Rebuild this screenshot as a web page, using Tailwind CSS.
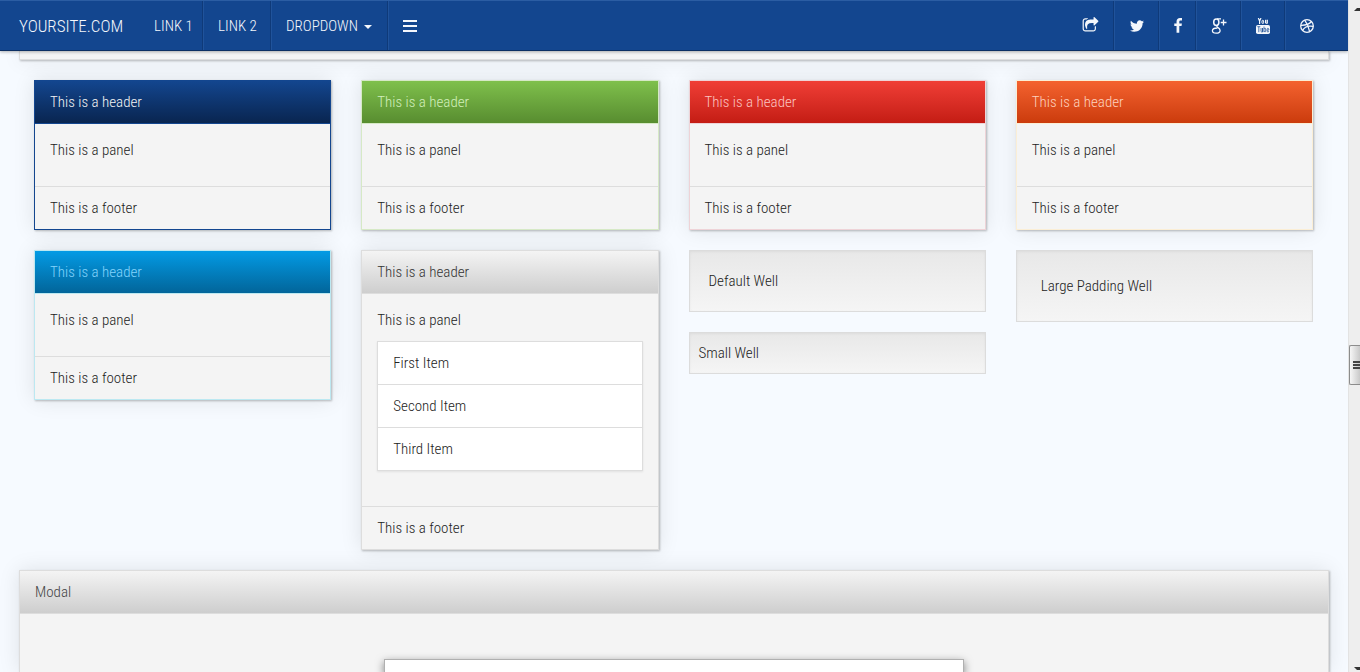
<!DOCTYPE html>
<html lang="en">
<head>
<meta charset="utf-8">
<title>YourSite.com</title>
<script src="https://cdn.jsdelivr.net/npm/@tailwindcss/browser@4"></script>
</head>
<body class="flex h-screen overflow-hidden bg-[#f6faff] font-['Roboto_Condensed','Liberation_Sans',sans-serif] text-[15px] font-light leading-[22px] text-[#222]">

<div class="flex min-w-0 flex-1 flex-col overflow-hidden">
  <header class="relative z-10 shrink-0 border-t border-b border-t-[#2b5da3] border-b-[#0c2f63] bg-[#13468f] text-[#f4f7fc] shadow-[0_1px_3px_rgba(0,0,0,0.3)]">
    <nav class="flex h-[49px] items-stretch text-[15px] font-normal" aria-label="Main">
      <a href="#" class="flex w-[139px] items-center pl-[19px] text-[17px] font-light">YOURSITE.COM</a>
      <a href="#" class="flex w-16 items-center border-r border-[#0f3a79] pl-[15px] font-light">LINK 1</a>
      <a href="#" class="flex w-[68px] items-center border-r border-l border-r-[#0f3a79] border-l-[#20539b] pl-[14px] font-light">LINK 2</a>
      <button type="button" class="flex w-[117px] items-center gap-[6px] border-r border-l border-r-[#0f3a79] border-l-[#20539b] pl-[14px] font-light">DROPDOWN
        <svg class="mt-[3px] h-1 w-2" viewBox="0 0 8 4" fill="currentColor" aria-hidden="true"><path d="M0 0h8L4 4z"/></svg>
      </button>
      <button type="button" aria-label="Menu" class="flex w-[43px] items-center border-l border-[#20539b] pl-[14px]">
        <svg class="h-3 w-[14px]" viewBox="0 0 14 12" fill="currentColor" aria-hidden="true"><path d="M0 0h14v2H0zM0 5h14v2H0zM0 10h14v2H0z"/></svg>
      </button>
      <div class="ml-auto flex pr-5">
        <a href="#" aria-label="Share" class="flex w-[46px] items-center justify-center border-r border-[#0f3a79]">
          <svg class="size-[17px]" viewBox="0 0 1792 1792" fill="currentColor"><path d="M1472 989v259q0 119-84.500 203.500t-203.500 84.500h-832q-119 0-203.500-84.500t-84.500-203.500v-832q0-119 84.500-203.500t203.500-84.500h255q13 0 22.500 9.500t9.500 22.500q0 27-26 32-77 26-133 60-10 4-16 4h-112q-66 0-113 47t-47 113v832q0 66 47 113t113 47h832q66 0 113-47t47-113v-214q0-19 18-29 28-13 54-37 16-16 35-8 21 9 21 29zm237-496l-384 384q-18 19-45 19-12 0-25-5-39-17-39-59v-192h-160q-323 0-438 131-119 137-74 473 3 23-20 34-8 2-12 2-16 0-26-13-10-14-21-31t-39.500-68.500-49.500-99.500-38.500-114-17.500-122q0-49 3.500-91t14-90 28-88 47-81.500 68.500-74 94.500-61.500 124.500-48.500 159.500-30.500 196.500-11h160v-192q0-42 39-59 13-5 25-5 26 0 45 19l384 384q19 19 19 45t-19 45z"/></svg>
        </a>
        <a href="#" aria-label="Twitter" class="flex w-[45px] items-center justify-center border-r border-l border-r-[#0f3a79] border-l-[#20539b]">
          <svg class="size-4" viewBox="0 0 1792 1792" fill="currentColor"><path d="M1684 408q-67 98-162 167 1 14 1 42 0 130-38 259.5t-115.500 248.500-184.500 210.500-258 146-323 54.500q-271 0-496-145 35 4 78 4 225 0 401-138-105-2-188-64.500t-114-159.500q33 5 61 5 43 0 85-11-112-23-185.500-111.500t-73.500-205.500v-4q68 38 146 41-66-44-105-115t-39-154q0-88 44-163 121 149 294.500 238.500t371.500 99.500q-8-38-8-74 0-134 94.500-228.500t228.500-94.500q140 0 236 102 109-21 205-78-37 115-142 178 93-10 186-50z"/></svg>
        </a>
        <a href="#" aria-label="Facebook" class="flex w-[37px] items-center justify-center border-r border-l border-r-[#0f3a79] border-l-[#20539b]">
          <svg class="size-4" viewBox="0 0 1792 1792" fill="currentColor"><path d="M1343 12v264h-157q-86 0-116 36t-30 108v189h293l-39 296h-254v759h-306v-759h-255v-296h255v-218q0-186 104-288.500t277-102.500q147 0 228 12z"/></svg>
        </a>
        <a href="#" aria-label="Google Plus" class="flex w-[45px] items-center justify-center border-r border-l border-r-[#0f3a79] border-l-[#20539b]">
          <svg class="size-4" viewBox="0 0 16 16" fill="none" stroke="currentColor"><ellipse cx="5.300" cy="4.300" rx="2.600" ry="3.200" stroke-width="1.500"/><path stroke-width="1.300" d="M6 .9h4M6.300 7.300c-.8.900-.5 1.400.5 2.100 1.600 1 2.300 1.800 2.300 3 0 1.600-1.600 2.700-4 2.700-2.200 0-3.700-.9-3.700-2.400 0-1.700 1.700-2.700 5-2.700M12.500 1.500v6M9.700 4.500h5.800"/></svg>
        </a>
        <a href="#" aria-label="YouTube" class="flex w-11 items-center justify-center border-r border-l border-r-[#0f3a79] border-l-[#20539b]">
          <svg class="h-4 w-[14px]" viewBox="0 0 14 16" fill="none" stroke="currentColor"><path stroke-width="1.200" d="M2.300 0l1.300 3v3M5 0L3.600 3"/><rect x="6" y="2.300" width="1.600" height="3.200" rx=".7"/><path d="M9.500 1.800v3.300q.6.800 1.700-.2V1.800v4"/><rect x="0" y="7" width="14" height="9" rx="1.800" fill="currentColor" stroke="none"/><path stroke="#13468f" stroke-width=".7" d="M1.300 8.700h3M2.800 8.700v5.500M5 10v3.500q.6.900 1.600 0V10v4.300M8 8.500v5.500M8.200 10.500q1.500-.8 1.500.5v2q0 1.300-1.500.5M12.900 13q-.2 1-1 1t-.8-1v-1.700q0-1 .8-1t.9 1v.8h-1.600"/></svg>
        </a>
        <a href="#" aria-label="Dribbble" class="flex w-[43px] items-center justify-center border-l border-[#20539b]">
          <svg class="size-[14px]" viewBox="0 0 14 14" fill="none" stroke="currentColor" stroke-width="1.300"><circle cx="7" cy="7" r="6.300"/><path d="M.8 6.300c4 .1 8.200-.6 10.700-3.800M4.700 1.100c2.300 3 4 6.700 4.900 11.500M2.600 11.500c1.800-3.600 5.500-5.100 10.700-4.100"/></svg>
        </a>
      </div>
    </nav>
  </header>

  <main class="flex min-h-0 flex-1 flex-col px-[19px]">
    <div class="h-[9px] shrink-0 border border-t-0 border-[#dddddd] bg-[#f4f4f4] shadow-[1px_1px_2px_rgba(0,0,0,0.25),0_0_20px_rgba(0,0,0,0.1)]"></div>

    <div class="mt-5 grid shrink-0 grid-cols-4 items-start gap-x-[30px] gap-y-5 pr-4 pl-[15px]">
      <section class="border border-[#13468f] bg-[#f4f4f4] shadow-[1px_1px_2px_rgba(0,0,0,0.25),0_0_20px_rgba(0,0,0,0.1)]">
        <h3 class="border-b border-[#13468f] bg-linear-to-b from-[#13468f] to-[#092550] px-[15px] py-[10px] text-[#f4f4f4]">This is a header</h3>
        <div class="px-[15px] pt-[15px] pb-[25px]"><p>This is a panel</p></div>
        <footer class="border-t border-[#dddddd] px-[15px] py-[10px]">This is a footer</footer>
      </section>

      <section class="border border-[#d6e9c6] bg-[#f4f4f4] shadow-[1px_1px_2px_rgba(0,0,0,0.25),0_0_20px_rgba(0,0,0,0.1)]">
        <h3 class="border-b border-[#d6e9c6] bg-linear-to-b from-[#7fc04c] to-[#588d30] px-[15px] py-[10px] text-[#d2efbc]">This is a header</h3>
        <div class="px-[15px] pt-[15px] pb-[25px]"><p>This is a panel</p></div>
        <footer class="border-t border-[#dddddd] px-[15px] py-[10px]">This is a footer</footer>
      </section>

      <section class="border border-[#eed3d7] bg-[#f4f4f4] shadow-[1px_1px_2px_rgba(0,0,0,0.25),0_0_20px_rgba(0,0,0,0.1)]">
        <h3 class="border-b border-[#eed3d7] bg-linear-to-b from-[#f03e36] to-[#c41c13] px-[15px] py-[10px] text-[#fbc4c1]">This is a header</h3>
        <div class="px-[15px] pt-[15px] pb-[25px]"><p>This is a panel</p></div>
        <footer class="border-t border-[#dddddd] px-[15px] py-[10px]">This is a footer</footer>
      </section>

      <section class="border border-[#fbeed5] bg-[#f4f4f4] shadow-[1px_1px_2px_rgba(0,0,0,0.25),0_0_20px_rgba(0,0,0,0.1)]">
        <h3 class="border-b border-[#fbeed5] bg-linear-to-b from-[#f4622e] to-[#cb3b0b] px-[15px] py-[10px] text-[#fdd2bf]">This is a header</h3>
        <div class="px-[15px] pt-[15px] pb-[25px]"><p>This is a panel</p></div>
        <footer class="border-t border-[#dddddd] px-[15px] py-[10px]">This is a footer</footer>
      </section>

      <section class="border border-[#bce8f1] bg-[#f4f4f4] shadow-[1px_1px_2px_rgba(0,0,0,0.25),0_0_20px_rgba(0,0,0,0.1)]">
        <h3 class="border-b border-[#bce8f1] bg-linear-to-b from-[#039be5] to-[#02659a] px-[15px] py-[10px] text-[#84d4fc]">This is a header</h3>
        <div class="px-[15px] pt-[15px] pb-[25px]"><p>This is a panel</p></div>
        <footer class="border-t border-[#dddddd] px-[15px] py-[10px]">This is a footer</footer>
      </section>

      <section class="border border-[#dddddd] bg-[#f4f4f4] shadow-[1px_1px_2px_rgba(0,0,0,0.25),0_0_20px_rgba(0,0,0,0.1)]">
        <h3 class="border-b border-[#dddddd] bg-linear-to-b from-[#f4f4f4] to-[#cecece] px-[15px] py-[10px] text-[#333]">This is a header</h3>
        <div class="px-[15px] pt-[15px] pb-[35px]">
          <p>This is a panel</p>
          <ul class="mt-[10px] divide-y divide-[#dddddd] border border-[#dddddd] bg-white shadow-[0_1px_2px_rgba(0,0,0,0.08)]">
            <li class="px-[15px] py-[10px]">First Item</li>
            <li class="px-[15px] py-[10px]">Second Item</li>
            <li class="px-[15px] py-[10px]">Third Item</li>
          </ul>
        </div>
        <footer class="border-t border-[#dddddd] px-[15px] py-[10px]">This is a footer</footer>
      </section>

      <div class="flex flex-col gap-5">
        <div class="border border-[#dcdcdc] bg-linear-to-b from-[#e8e8e8] to-[#f5f5f5] p-[19px] shadow-[inset_0_1px_3px_rgba(0,0,0,0.05)]">Default Well</div>
        <div class="border border-[#dcdcdc] bg-linear-to-b from-[#e8e8e8] to-[#f5f5f5] p-[9px] shadow-[inset_0_1px_3px_rgba(0,0,0,0.05)]">Small Well</div>
      </div>

      <div class="border border-[#dcdcdc] bg-linear-to-b from-[#e8e8e8] to-[#f5f5f5] p-6 shadow-[inset_0_1px_3px_rgba(0,0,0,0.05)]">Large Padding Well</div>
    </div>

    <section class="mt-5 flex min-h-0 flex-1 flex-col border border-b-0 border-[#dddddd] bg-[#f4f4f4] shadow-[1px_1px_2px_rgba(0,0,0,0.25),0_0_20px_rgba(0,0,0,0.1)]">
      <h3 class="border-b border-[#dddddd] bg-linear-to-b from-[#f4f4f4] to-[#cecece] px-[15px] py-[10px] text-[#444]">Modal</h3>
      <div class="flex flex-1 justify-center overflow-hidden pt-[45px]">
        <div class="w-[580px] border border-b-0 border-[#b0b0b0] bg-white shadow-[0_3px_9px_rgba(0,0,0,0.5)]"></div>
      </div>
    </section>
  </main>
</div>

<aside class="flex w-3 shrink-0 flex-col items-end justify-between border-l border-[#e3e3e3] bg-[#eeeeee]" aria-hidden="true">
  <svg class="mt-2 h-[3px] w-[6px]" viewBox="0 0 6 3" fill="#333"><path d="M0 3h6V0H3z"/></svg>
  <div class="mt-[52px] flex h-10 w-[11px] items-center justify-end rounded-l-xs border border-r-0 border-[#8c8c8c] bg-linear-to-r from-[#f6f6f6] to-[#c9c9c9]">
    <svg class="h-2 w-[7px]" viewBox="0 0 7 8" fill="#444"><path d="M0 0h7v2H0zM0 3h7v2H0zM0 6h7v2H0z"/></svg>
  </div>
  <svg class="mb-[2px] h-[3px] w-[6px]" viewBox="0 0 6 3" fill="#333"><path d="M0 0h6v3H3z"/></svg>
</aside>
</body>
</html>
